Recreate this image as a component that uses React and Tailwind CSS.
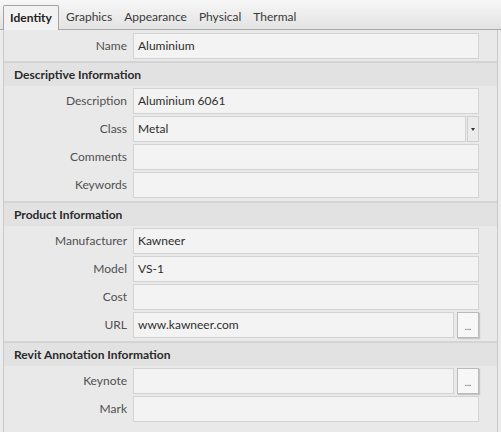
const tabs = ['Identity', 'Graphics', 'Appearance', 'Physical', 'Thermal'];

const sections = [
  {
    title: 'Descriptive Information',
    rows: [
      { label: 'Description', value: 'Aluminium 6061' },
      { label: 'Class', value: 'Metal', dropdown: true },
      { label: 'Comments', value: '' },
      { label: 'Keywords', value: '' },
    ],
  },
  {
    title: 'Product Information',
    rows: [
      { label: 'Manufacturer', value: 'Kawneer' },
      { label: 'Model', value: 'VS-1' },
      { label: 'Cost', value: '' },
      { label: 'URL', value: 'www.kawneer.com', browse: true },
    ],
  },
  {
    title: 'Revit Annotation Information',
    rows: [
      { label: 'Keynote', value: '', browse: true },
      { label: 'Mark', value: '' },
    ],
  },
];

function Field({ label, value, dropdown, browse }) {
  return (
    <div className="flex h-[26px] items-center">
      <div className="w-[129px] shrink-0 pr-[6px] text-right text-[12px] text-[#505050]">{label}</div>
      <div className="flex flex-1 items-stretch self-stretch gap-[2px]">
        <div className="flex flex-1 items-center border border-[#d3d3d3] bg-[#f3f3f3] px-[4px] text-[12px] text-[#2e2e2e]">
          {value}
        </div>
        {dropdown && (
          <div className="-ml-[1px] flex w-[12px] items-center justify-center border border-[#cfcfcf] bg-[#ebebeb]">
            <div className="h-0 w-0 border-x-[2.5px] border-t-[3px] border-x-transparent border-t-[#333]" />
          </div>
        )}
        {browse && (
          <div className="ml-[1px] flex w-[22px] items-end justify-center border border-[#b9b9b9] bg-[#f7f7f7] pb-[6px] shadow-[1px_1px_1px_rgba(0,0,0,0.15)]">
            <span className="text-[9px] leading-none text-[#555]">...</span>
          </div>
        )}
      </div>
      <div className="w-[18px] shrink-0" />
    </div>
  );
}

export default function App() {
  return (
    <div
      className="flex h-[432px] w-[501px] flex-col overflow-hidden bg-[#ececec]"
      style={{ fontFamily: 'Lato, "Open Sans", sans-serif' }}
    >
      {/* Tab strip */}
      <div className="flex h-[30px] shrink-0 items-end border-b border-[#a9a9a9] bg-gradient-to-b from-[#f7f7f7] to-[#e3e3e3] pl-[3px]">
        {tabs.map((t, i) =>
          i === 0 ? (
            <div
              key={t}
              className="-mb-[1px] mr-[1px] flex h-[25px] w-[56px] items-center justify-center rounded-t-[2px] border border-b-0 border-[#a3a3a3] bg-[#f2f2f2] text-[12px] font-bold text-[#222]"
            >
              {t}
            </div>
          ) : (
            <div key={t} className="flex h-[24px] items-center px-[6px] text-[12px] text-[#3a3a3a]">
              {t}
            </div>
          )
        )}
      </div>

      {/* Property panel */}
      <div className="ml-[3px] mr-[3px] flex flex-1 flex-col border-l border-r border-[#c9c9c9] bg-[#e9e9e9]">
        <div className="pt-[3px] pb-[2px]">
          <Field label="Name" value="Aluminium" />
        </div>

        {sections.map((s) => (
          <div key={s.title} className="border-t-2 border-[#d4d4d4]">
            <div className="flex h-[23px] items-center bg-[#e2e2e2] pl-[10px] text-[12px] font-bold text-[#2a2a2a]">
              {s.title}
            </div>
            <div className="flex flex-col gap-[2px] pt-[2px] pb-[3px]">
              {s.rows.map((r) => (
                <Field key={r.label} {...r} />
              ))}
            </div>
          </div>
        ))}
      </div>
    </div>
  );
}
